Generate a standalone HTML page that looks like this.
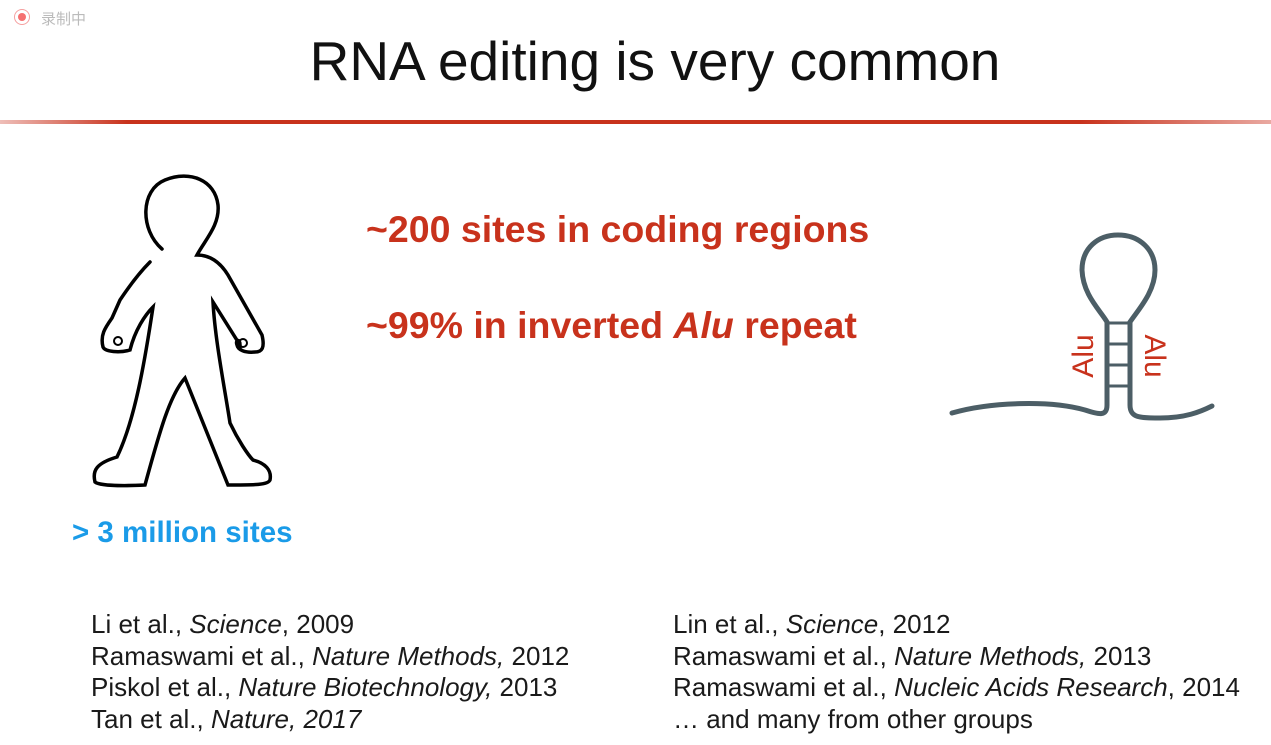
<!DOCTYPE html>
<html><head><meta charset="utf-8"><style>
html,body{margin:0;padding:0;background:#fff;}
body{width:1271px;height:745px;position:relative;overflow:hidden;font-family:"Liberation Sans","Noto Sans CJK SC",sans-serif;}
.t{position:absolute;white-space:nowrap;}
.title{left:0;width:1310px;text-align:center;top:29px;font-size:55px;color:#111;}
.red{color:#c8321c;font-weight:bold;font-size:37.5px;left:366px;}
.ref{font-size:26px;color:#1a1a1a;line-height:31.5px;top:609px;}
</style></head><body>
<div class="t" style="left:14px;top:9px;width:16px;height:16px;border-radius:50%;border:1.5px solid #f5a0a0;box-sizing:border-box;"></div>
<div class="t" style="left:18px;top:13px;width:8px;height:8px;border-radius:50%;background:#f57070;"></div>
<div class="t" style="left:41px;top:8px;font-size:15px;color:#bbb;">录制中</div>
<div class="t title">RNA editing is very common</div>
<div class="t" style="left:0;top:120px;width:1271px;height:4px;background:linear-gradient(90deg,rgba(200,40,20,0.3),#c8321c 10%,#c8321c 85%,rgba(200,40,20,0.4));"></div>
<div class="t red" style="top:208px;">~200 sites in coding regions</div>
<div class="t red" style="top:304px;">~99% in inverted <i>Alu</i> repeat</div>
<div class="t" style="left:72px;top:516px;font-size:29.5px;font-weight:bold;color:#1a9be8;">&gt; 3 million sites</div>
<svg class="t" style="left:0;top:0" width="1271" height="745">
<path d="M162 249 C140 230 140 190 165 180 C190 170 215 180 218 205 C220 225 205 240 197 255 C210 255 220 262 228 275 L262 335 C265 348 262 352 255 352 C245 353 238 350 237 345 C235 340 240 338 240 345 L213 302 C215 340 225 390 230 423 C238 440 248 455 253 460 C265 463 272 470 270 480 C268 485 255 485 228 485 L185 378 C170 395 160 430 145 485 C125 486 100 486 95 482 C92 470 97 463 117 457 C135 420 145 360 153 307 C145 315 135 330 130 350 C120 353 105 352 103 347 C100 335 105 328 112 318 L120 300 C130 285 140 272 150 262" fill="none" stroke="#000" stroke-width="3.5" stroke-linecap="round"/>
<circle cx="118" cy="341" r="4" fill="none" stroke="#000" stroke-width="2"/>
<circle cx="243" cy="343" r="4" fill="none" stroke="#000" stroke-width="2"/>
<g fill="none" stroke="#4c5e66" stroke-width="5" stroke-linecap="round">
<path d="M952 413 C990 402 1050 400 1085 410 C1100 415 1107 416 1107 405 L1107 322 C1100 310 1083 295 1082 270 C1082 248 1098 235 1118 235 C1140 235 1155 250 1155 270 C1155 292 1138 310 1130 322 L1130 405 C1130 418 1140 418 1160 418 C1185 418 1200 412 1212 406"/>
<path d="M1107 323 H1130 M1107 344 H1130 M1107 365 H1130 M1107 386 H1130" stroke-width="3"/>
</g>
<text x="1093" y="356" transform="rotate(-90 1093 356)" text-anchor="middle" fill="#c8321c" font-size="30" font-family="Liberation Sans">Alu</text>
<text x="1145" y="356" transform="rotate(90 1145 356)" text-anchor="middle" fill="#c8321c" font-size="30" font-family="Liberation Sans">Alu</text>
</svg>
<div class="t ref" style="left:91px;">Li et al., <i>Science</i>, 2009<br>Ramaswami et al., <i>Nature Methods,</i> 2012<br>Piskol et al., <i>Nature Biotechnology,</i> 2013<br>Tan et al., <i>Nature, 2017</i></div>
<div class="t ref" style="left:673px;">Lin et al., <i>Science</i>, 2012<br>Ramaswami et al., <i>Nature Methods,</i> 2013<br>Ramaswami et al., <i>Nucleic Acids Research</i>, 2014<br>… and many from other groups</div>
</body></html>
